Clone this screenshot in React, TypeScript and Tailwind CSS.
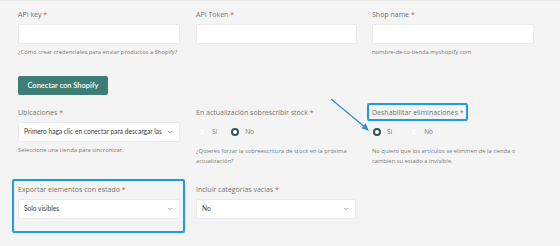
import { ChevronDown } from "lucide-react";

const sans = "font-['Open_Sans',sans-serif]";
const lato = "font-['Lato',sans-serif]";

function Label({ text }: { text: string }) {
  return (
    <div className={`${sans} h-[11px] text-[7px] leading-[11px] text-[#757575]`}>
      {text} <span className="text-[#d9534f]">*</span>
    </div>
  );
}

function Help({ children, top = "mt-[3px]" }: { children: React.ReactNode; top?: string }) {
  return (
    <p className={`${sans} ${top} text-[5.8px] leading-[10px] text-[#7a7a7a]`}>{children}</p>
  );
}

function Input({ w }: { w: string }) {
  return <div className={`${w} mt-[4px] h-[20px] rounded-[2px] border border-[#ebebeb] bg-white`} />;
}

function Select({ w, value }: { w: string; value: string }) {
  return (
    <div
      className={`${w} mt-[4px] flex h-[20px] items-center justify-between rounded-[2px] border border-[#ebebeb] bg-white pl-[5px] pr-[6px]`}
    >
      <span className={`${lato} truncate text-[6.6px] text-[#3d3d3d]`}>{value}</span>
      <ChevronDown className="ml-[2px] h-[6px] w-[6px] shrink-0 text-[#666]" strokeWidth={2.5} />
    </div>
  );
}

function Radio({ on, label }: { on?: boolean; label: string }) {
  return (
    <div className="flex items-center gap-[6px]">
      {on ? (
        <span className="h-[8px] w-[8px] rounded-full border-[2px] border-[#2f5753] bg-white" />
      ) : (
        <span className="h-[8px] w-[8px] rounded-full border border-[#ececec] bg-white" />
      )}
      <span className={`${sans} text-[6.5px] text-[#757575]`}>{label}</span>
    </div>
  );
}

export default function App() {
  return (
    <div className="relative h-[246px] w-[560px] overflow-hidden border-t border-[#e9e9e9] bg-[#f4f4f4] pl-[18px] pt-[8px]">
      <div className="grid grid-cols-[178px_176px_162px]">
        <div>
          <Label text="API key" />
          <Input w="w-[162px]" />
          <Help>¿Cómo crear credenciales para enviar productos a Shopify?</Help>
        </div>
        <div>
          <Label text="API Token" />
          <Input w="w-[161px]" />
        </div>
        <div>
          <Label text="Shop name" />
          <Input w="w-[162px]" />
          <Help>nombre-de-tu-tienda.myshopify.com</Help>
        </div>
      </div>

      <button
        type="button"
        className={`${lato} mt-[19px] flex h-[19px] w-[90px] items-center justify-center rounded-[2px] bg-[#3e7d76] text-[7.5px] font-semibold text-white`}
      >
        Conectar con Shopify
      </button>

      <div className="mt-[12px] grid grid-cols-[178px_176px_162px]">
        <div>
          <Label text="Ubicaciones" />
          <Select w="w-[162px]" value="Primero haga clic en conectar para descargar las" />
          <Help>Seleccione una tienda para sincronizar.</Help>
        </div>
        <div>
          <Label text="En actualización sobrescribir stock" />
          <div className="mt-[9px] flex h-[9px] items-center gap-[14px] pl-[2px]">
            <Radio label="Sí" />
            <Radio on label="No" />
          </div>
          <Help top="mt-[10px]">
            ¿Quieres forzar la sobreescritura de stock en la próxima
            <br />
            actualización?
          </Help>
        </div>
        <div>
          <div className="relative">
            <Label text="Deshabilitar eliminaciones" />
            <span className="pointer-events-none absolute -left-[5px] -top-[4px] h-[18px] w-[101px] rounded-[2px] border-2 border-[#1c9be8]" />
          </div>
          <div className="mt-[9px] flex h-[9px] items-center gap-[18px] pl-[1px]">
            <Radio on label="Sí" />
            <Radio label="No" />
          </div>
          <Help top="mt-[10px]">
            No quiero que los artículos se eliminen de la tienda o
            <br />
            cambien su estado a invisible.
          </Help>
        </div>
      </div>

      <div className="mt-[18px] grid grid-cols-[178px_176px_162px]">
        <div className="relative">
          <Label text="Exportar elementos con estado" />
          <Select w="w-[162px]" value="Solo visibles" />
          <span className="pointer-events-none absolute -left-[6px] -top-[5px] h-[54px] w-[173px] rounded-[2px] border-2 border-[#1c9be8]" />
        </div>
        <div>
          <Label text="Incluir categorías vacías" />
          <Select w="w-[160px]" value="No" />
        </div>
      </div>

      <svg
        className="pointer-events-none absolute left-0 top-0"
        width="560"
        height="246"
        viewBox="0 0 560 246"
      >
        <line x1="331" y1="98" x2="366" y2="127" stroke="#2a8fd8" strokeWidth="1.3" />
        <path d="M369 130 L361.5 127.2 L365.6 122.3 Z" fill="#2a8fd8" />
      </svg>
    </div>
  );
}
